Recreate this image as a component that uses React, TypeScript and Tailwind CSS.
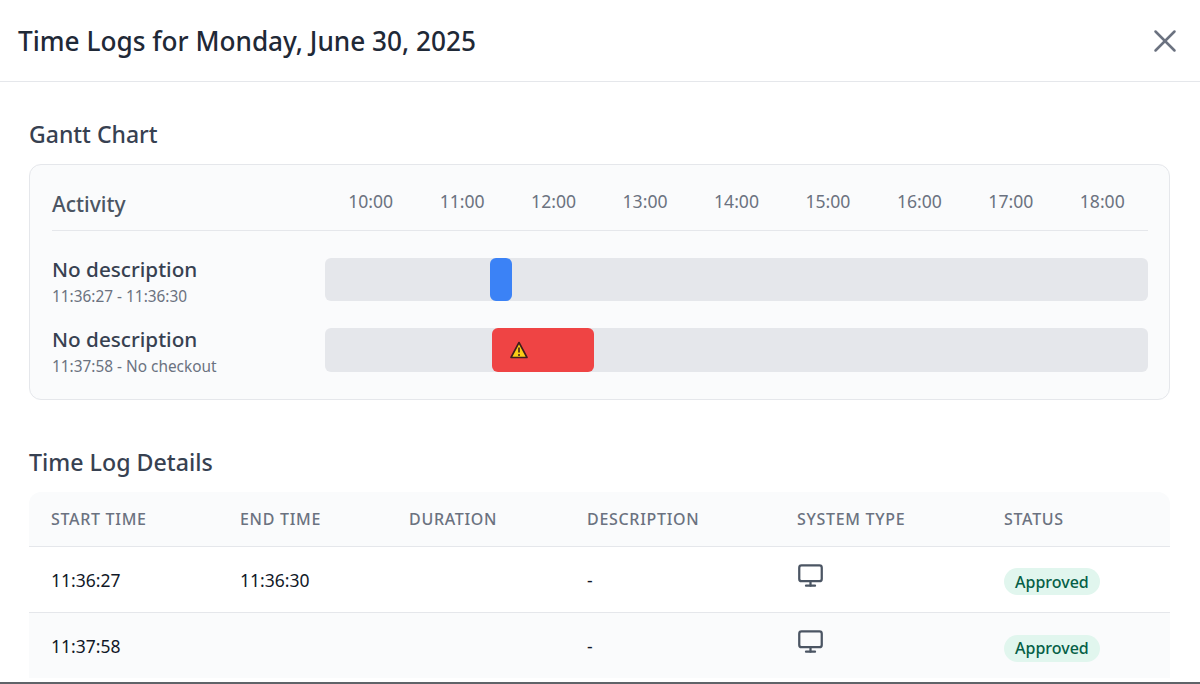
import { Monitor, X } from "lucide-react";

const hours = ["10:00", "11:00", "12:00", "13:00", "14:00", "15:00", "16:00", "17:00", "18:00"];

const logs = [
  { start: "11:36:27", end: "11:36:30", striped: false },
  { start: "11:37:58", end: "", striped: true },
];

const columns = ["Start Time", "End Time", "Duration", "Description", "System Type", "Status"];

const WarningIcon = () => (
  <svg width="18" height="18" viewBox="0 0 18 18" className="block">
    <path d="M9 1.5 L17 16.5 L1 16.5 Z" fill="#facc15" stroke="#3f1d1d" strokeWidth="1.6" strokeLinejoin="round" />
    <path d="M9 6.5 V11.5" stroke="#3f1d1d" strokeWidth="1.6" />
    <circle cx="9" cy="14" r="1" fill="#3f1d1d" />
  </svg>
);

const GanttRow = ({ time, bar, warning }: { time: string; bar: string; warning?: boolean }) => (
  <div className="flex items-center h-[70.5px]">
    <div className="w-[273px] shrink-0 pt-[4px]">
      <div className="text-[20.7px] leading-[27px] font-medium text-[#374151]">No description</div>
      <div className="mt-[4px] text-[15.4px] leading-[20px] text-[#6b7280]">{time}</div>
    </div>
    <div className="relative flex-1 h-[43.5px] bg-[#e5e7eb] rounded-md">
      <div className={`absolute top-0 h-full rounded-md flex items-center ${bar}`}>
        {warning && (
          <span className="ml-[18px]">
            <WarningIcon />
          </span>
        )}
      </div>
    </div>
  </div>
);

export default function App() {
  return (
    <div className="w-[1200px] h-[684px] overflow-hidden bg-white font-['Noto_Sans',sans-serif] border-b-2 border-[#5f6368]">
      <header className="h-[82px] flex items-center justify-between pl-[18px] pr-[16px] border-b border-[#e5e7eb]">
        <h1 className="text-[26.2px] pt-[2px] font-medium text-[#1f2937]">Time Logs for Monday, June 30, 2025</h1>
        <X className="w-[38px] h-[38px] text-[#6b7280]" strokeWidth={1.6} />
      </header>

      <main className="pl-[29px] pr-[30px]">
        <h2 className="mt-[36px] text-[23px] leading-[32px] font-medium text-[#374151]">Gantt Chart</h2>
        <section className="mt-[14px] h-[236px] bg-[#fafbfc] border border-[#e5e7eb] rounded-xl pl-[22px] pr-[21px]">
          <div className="flex h-[66px] border-b border-[#e5e7eb]">
            <div className="w-[273px] shrink-0 pt-[24px] text-[21px] leading-[30px] font-medium text-[#4b5563]">
              Activity
            </div>
            <div className="flex-1 grid grid-cols-9 pt-[22px]">
              {hours.map((h) => (
                <div key={h} className="text-center text-[17.6px] leading-[28px] text-[#6b7280]">
                  {h}
                </div>
              ))}
            </div>
          </div>
          <div className="pt-[13px]">
            <GanttRow time="11:36:27 - 11:36:30" bar="left-[165px] w-[22px] bg-[#3b82f6]" />
            <GanttRow time="11:37:58 - No checkout" bar="left-[167px] w-[102px] bg-[#ef4444]" warning />
          </div>
        </section>

        <h2 className="mt-[46px] text-[23.2px] leading-[32px] font-medium text-[#374151]">Time Log Details</h2>
        <table className="mt-[14px] w-full table-fixed border-collapse">
          <colgroup>
            <col className="w-[189px]" />
            <col className="w-[169px]" />
            <col className="w-[178px]" />
            <col className="w-[210px]" />
            <col className="w-[207px]" />
            <col />
          </colgroup>
          <thead>
            <tr className="h-[54px] bg-[#fafbfc] border-b border-[#e5e7eb]">
              {columns.map((c, i) => (
                <th
                  key={c}
                  className={`pl-[22px] text-left text-[16px] font-medium uppercase tracking-[0.7px] text-[#6b7280] ${
                    i === 0 ? "rounded-tl-xl" : ""
                  } ${i === 5 ? "rounded-tr-xl" : ""}`}
                >
                  {c}
                </th>
              ))}
            </tr>
          </thead>
          <tbody>
            {logs.map((log) => (
              <tr
                key={log.start}
                className={`h-[66px] text-[17.5px] text-[#111827] ${
                  log.striped ? "bg-[#fafbfc]" : "bg-white border-b border-[#e5e7eb]"
                }`}
              >
                <td className="pl-[22px] pt-[2px]">{log.start}</td>
                <td className="pl-[22px] pt-[2px]">{log.end}</td>
                <td className="pl-[22px]"></td>
                <td className="pl-[22px] pt-[2px]">-</td>
                <td className="pl-[22px] pb-[8px]">
                  <Monitor className="w-[27px] h-[27px] text-[#4b5563]" strokeWidth={2} />
                </td>
                <td className="pl-[22px] pt-[5px]">
                  <span className="inline-flex items-center h-[27px] px-[11px] rounded-full bg-[#e1f6ee] text-[16px] font-medium text-[#065f46]">
                    Approved
                  </span>
                </td>
              </tr>
            ))}
          </tbody>
        </table>
      </main>
    </div>
  );
}
